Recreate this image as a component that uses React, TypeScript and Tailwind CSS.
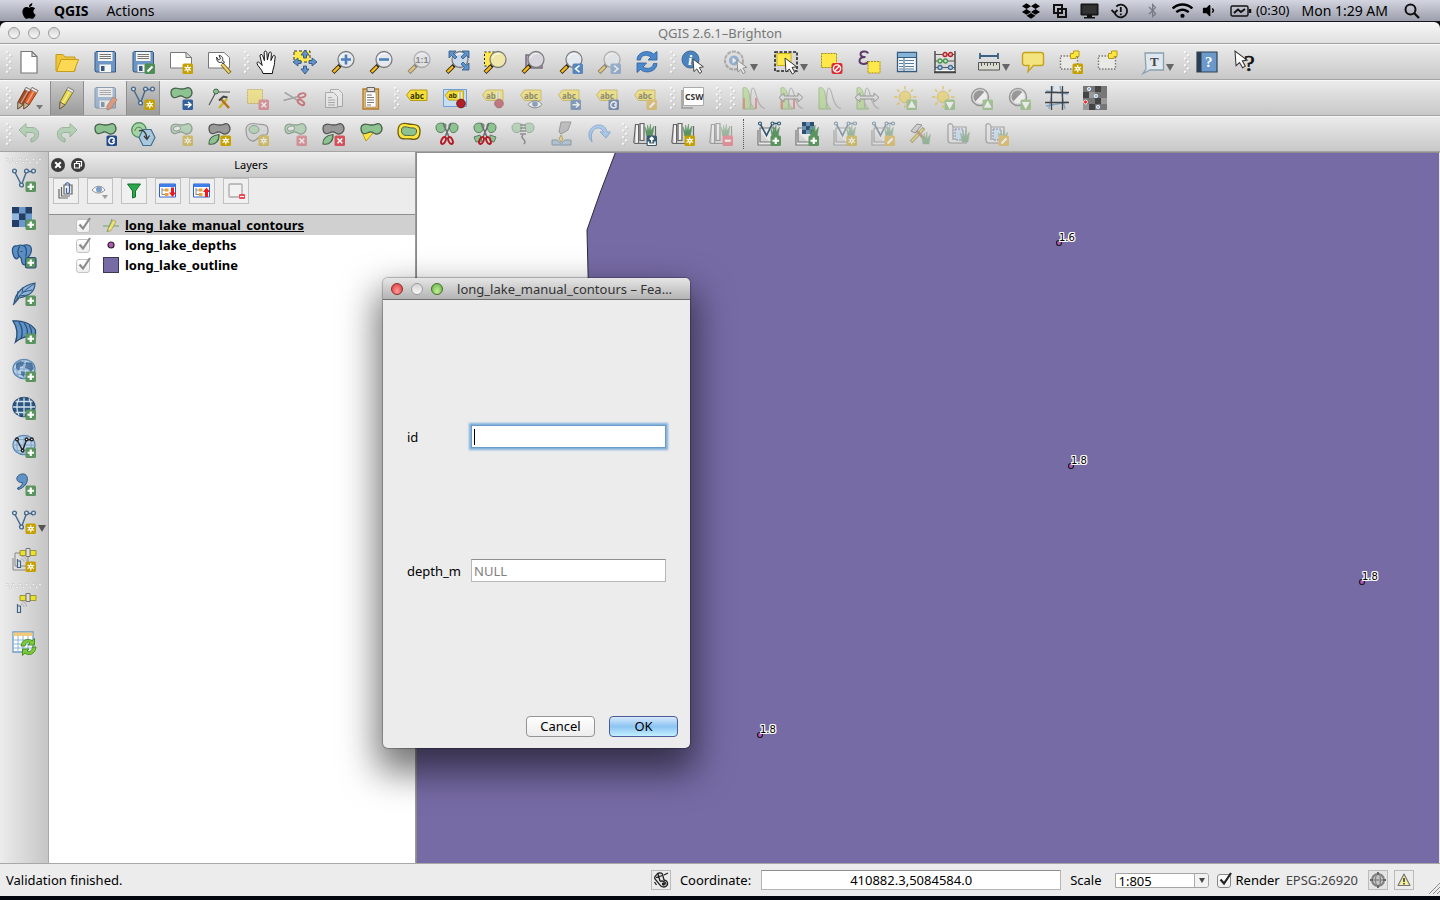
import React from "react";
import { FaApple, FaDropbox, FaWifi, FaVolumeDown, FaBluetoothB } from "react-icons/fa";

type Tool = { n: string; d?: React.ReactNode; off?: boolean; on?: boolean; menu?: boolean; grip?: "s" | "m" | "l" | "dots" };

const GLYPH: Record<string, string> = {
  star: "M18.750 15v7.500M15.500 17l6.500 3.600M22 17l-6.500 3.600",
  plus: "M18.750 15.500v6.500M15.500 18.750h6.500",
  pen: "M16.500 21.500l5-5",
  x: "M16.500 16.500l4.800 4.800M21.300 16.500l-4.800 4.800",
  right: "M15.500 18.750h6M19 16l3 2.750-3 2.750",
  rot: "M21 16.800a3 3 0 1 0 .5 3.400M19 19h2v-3",
  minus: "M15.800 18.750h6",
  left: "M20.500 15.500l-4 3.300 4 3.300",
  next: "M17 15.500l4 3.300-4 3.300",
  up: "M18.750 16l2.700 5h-5.400z",
  down: "M18.750 21.800l2.700-5h-5.400z",
  load: "M18.750 20.500v-5M16.700 17.400l2-2 2 2M15.500 19.500v2.700h6.500v-2.700",
};
const COLOR: Record<string, string> = {
  star: "#c4a000", plus: "#5b945f", pen: "#4e8d57", x: "#d2525c", right: "#34609b", rot: "#22498a",
  minus: "#e8505a", left: "#5786bd", next: "#5786bd", up: "#6dab52", down: "#6dab52", load: "#37596f",
};
function Badge({ k, c }: { k: string; c?: string }) {
  const solid = k === "up" || k === "down";
  return (
    <g>
      <rect x="13.500" y="13.500" width="10.500" height="10.500" rx="1.500" fill={c ?? COLOR[k]} />
      <path d={GLYPH[k]} stroke="#fff" strokeWidth={k === "plus" || k === "minus" || k === "pen" ? 2.200 : k === "star" ? 1.100 : 1.500} fill={solid ? "#fff" : "none"} />
      {k === "star" && <circle cx="18.750" cy="18.800" r="2" fill="#fff" />}
      {k === "star" && <circle cx="18.750" cy="18.800" r=".8" fill={COLOR.star} />}
    </g>
  );
}

const BLOB = "M2 6C2 2.500 6 1.500 9 2.500S15 3 18 1.800S23 4 23 7S20 12.500 17 12S14 9.500 11 10S7 12.500 4.500 11.500S2 8.500 2 6Z";
const Blob = ({ c = "#8cc391", s = "#47604a" }: { c?: string; s?: string }) => <path d={BLOB} fill={c} stroke={s} strokeWidth="1.300" />;
const Leaf = () => <path d="M2 22C1.500 17 5 13.500 12 12.500C12.500 18 9 23.500 2 22Z" fill="#8cc391" stroke="#47604a" strokeWidth="1.200" />;
const Ring = () => (
  <g>
    <Blob />
    <ellipse cx="8" cy="6.500" rx="3.600" ry="2.400" fill="#e8e8e8" stroke="#47604a" transform="rotate(-15 8 6.500)" />
  </g>
);
const Floppy = ({ c = "#6b96c6" }: { c?: string }) => (
  <g>
    <path d="M3 1.500h18.500l1 1v19.500h-19.500l-1-1v-18.500z" fill={c} stroke="#36587e" />
    <rect x="5" y="2" width="14.500" height="9" fill="#f4f4f2" />
    <path d="M6.500 4.500h11.500M6.500 6.500h11.500M6.500 8.500h11.500" stroke="#777" />
    <rect x="6.500" y="14.500" width="11.500" height="7.500" fill="#f4f4f2" />
    <rect x="8" y="16" width="3.500" height="5" fill="#36587e" />
  </g>
);
const Lens = ({ fill = "#e4e9ef" }: { fill?: string }) => (
  <g>
    <path d="M9.500 15l-7.500 7.500" stroke="#3a2e10" strokeWidth="4" />
    <path d="M8.500 16l-6 6" stroke="#f8bd1c" strokeWidth="2.400" />
    <path d="M10.500 14l-2.500 2.500" stroke="#222" strokeWidth="2.500" />
    <circle cx="15" cy="9.500" r="8" fill={fill} stroke="#7d7d7d" strokeWidth="1.300" />
    <path d="M9.500 8a6 6 0 0 1 8-4" stroke="#fff" fill="none" />
  </g>
);
const Cursor = ({ x, y, k = 1 }: { x: number; y: number; k?: number }) => (
  <path transform={`translate(${x} ${y}) scale(${k})`} d="M0 0l1 14 3.300-3 3 5 2.500-1.600-2.800-4.900 4.500-.8z" fill="#fff" stroke="#333" strokeWidth="1" />
);
const Pencil = ({ c = "#e8d94c", s = "#7d722b" }: { c?: string; s?: string }) => (
  <g>
    <path d="M4 16L12 1.500l6 3.200L9 19l-5 4z" fill={c} stroke={s} />
    <path d="M7 17l8-14" stroke="#fff" strokeOpacity=".45" strokeWidth="1.500" />
    <path d="M4 16l5 3-5.500 4z" fill="#cbb58e" stroke="#5b5141" strokeWidth=".8" />
    <path d="M12 1.500l6 3.200-1.300 2-6-3.200z" fill="#eee" stroke="#777" strokeWidth=".7" />
  </g>
);
const Tag = ({ t = "abc" }: { t?: string }) => (
  <g>
    <path d="M1.500 6l4-5h16.500v10.500H5.500z" fill="#f6df34" stroke="#b59a12" />
    <text x="5" y="9.500" fontSize="8" fontWeight="bold" fill="#3c3710" fontFamily="Noto Sans">{t}</text>
  </g>
);
const Pin = () => (
  <g>
    <path d="M17 6v8" stroke="#fff" strokeWidth="3" />
    <path d="M17 6v8" stroke="#888" />
    <circle cx="18" cy="17.500" r="4.300" fill="#b01f27" stroke="#7c1016" />
  </g>
);
const VEE = "M2.500 3.500L9.500 17 14.500 3.500M15 3.500h6";
const Vee = () => (
  <g fill="#dfe8f0" stroke="#44678b" strokeWidth="1.400">
    <path d={VEE} fill="none" />
    <circle cx="2.500" cy="3" r="1.900" /><circle cx="14.500" cy="3" r="1.900" /><circle cx="21.500" cy="3" r="1.900" /><circle cx="9.500" cy="17" r="1.900" />
  </g>
);
const Grass = ({ x = 0 }: { x?: number }) => (
  <path transform={`translate(${x} 0)`} d="M15 15L13.500 6l2.500 5 0-7 1.500 6 1.500-7 .2 7L22.500 5 21 15z" fill="#5b9363" stroke="#5b9363" strokeWidth=".5" />
);
const Books = () => (
  <g>
    <path d="M2.500 2.500h3v19h-3C1 21.500.5 20 1 18.500zM7 1.500h4v17H7zM5.500 21.500H22.500V4" fill="none" stroke="#666" strokeWidth="1.200" />
    <path d="M3 3.500h2v17H3zM8 2.500h2v15H8z" fill="#f3f3f3" />
    <g transform="translate(-1.500 -1)"><Grass /></g>
  </g>
);
const Plate = () => <path d="M1 8v15h15M3 6h15v14H3z" fill="#e9e9e9" stroke="#777" strokeWidth="1.200" />;
const MiniVee = () => (
  <g fill="#e8eef4" stroke="#32556f" strokeWidth="1.200">
    <path d="M3 1.500l6.500 12 6-12h6" fill="none" strokeWidth="1.600" />
    <circle cx="3" cy="1.500" r="1.500" /><circle cx="15.500" cy="1.500" r="1.500" /><circle cx="22" cy="1.500" r="1.500" />
  </g>
);
const Scissors = () => (
  <g fill="none">
    <path d="M8 1l6 14M16 1l-6 14" stroke="#6b7070" strokeWidth="1.600" />
    <ellipse cx="8.500" cy="18.500" rx="2" ry="3.700" transform="rotate(25 8.500 18.500)" stroke="#b31b24" strokeWidth="1.900" />
    <ellipse cx="15.500" cy="18.500" rx="2" ry="3.700" transform="rotate(-25 15.500 18.500)" stroke="#b31b24" strokeWidth="1.900" />
  </g>
);
const Leaves = () => (
  <path d="M1 5c0-4 6-5 10-2.500C11 7 9 11.500 5 10.500 2 10 1 8 1 5zM23 5c0-4-6-5-9-2.500 0 4.500 1.500 9 5 8 3-.5 4-3 4-5.500z" fill="#8cc391" stroke="#5a7d5e" />
);
const Hist = ({ red, arr }: { red?: boolean; arr?: boolean }) => (
  <g>
    <path d="M2 23V2c4-2 6 3 6.500 8S10 20 14 23z" fill="#a8d478" stroke="#6aa248" />
    <path d="M9.500 22C9.500 10 10 2 12 2s3 8 5 13 4 7 7 7.500" fill="none" stroke="#8b8b8b" strokeWidth="1.200" />
    {red && <path d="M3 12v11M15 12v11" stroke="#e33b3b" strokeWidth="1.600" />}
    {arr && <path d="M0 11.500L5 7v3h14V7l5 4.500L19 16v-3H5v3z" fill="#d8d8d8" stroke="#555" />}
  </g>
);
const Sun = () => (
  <g>
    <circle cx="12" cy="11" r="5.800" fill="#eccb3c" stroke="#c9a820" />
    <path d="M12 0v3.500M1 11h3.500M20 11h3.500M4 3.500l2.500 2.300M20 3.500l-2.500 2.300M4 19l2.500-2.500M12 19v3" stroke="#dcb92b" strokeWidth="1.800" />
  </g>
);
const Contrast = () => (
  <g>
    <circle cx="11" cy="11" r="8.500" fill="#ddd" stroke="#555" strokeWidth="1.500" />
    <path d="M15.500 6A6.500 6.500 0 1 0 6.500 15.500z" fill="#555" /><path d="M15.500 6A6.500 6.500 0 0 1 6.500 15.500z" fill="#fff" />
  </g>
);
const Undo = () => <path d="M2 8L9 1.500v4h6c9 0 9 13-1 14.500v-3.500c5-1 5-6 0-6H9v4.500z" fill="#8cc391" stroke="#5a8d62" />;
const Poly = () => <path d="M3.500 8h17v13h-17z" fill="#e9e9e6" stroke="#777" strokeDasharray="1.500 1.500" strokeWidth="1.400" />;
const YEL = "M13.500 8.500v-5h3V1h5.500v5.500h-3v2z";
const Globe = ({ dark }: { dark?: boolean }) => (
  <g>
    <ellipse cx="12" cy="11" rx="11" ry="9.700" fill={dark ? "#2c567f" : "#b9d0e6"} stroke={dark ? "#24486b" : "#5985b0"} strokeWidth="1.300" />
    <path d="M1 11h22M3.500 5.500h17M3.500 16.500h17M12 1.500v19M7 2.500c-3 6-3 11 0 17M17 2.500c3 6 3 11 0 17" fill="none" stroke={dark ? "#cfdeeb" : "#7fa6cc"} strokeWidth={dark ? 1.300 : 1} />
  </g>
);
const Sat = () => (
  <g>
    <path d="M8 2.500h6v5H8zM18 2.500h6v5h-6z" fill="#ece22b" stroke="#8b852a" strokeWidth=".8" />
    <path d="M14 0.500h4v8h-4z" fill="#ddd" stroke="#777" />
    <path d="M9 11c2 0 3 1 3 3M9.500 8.500c3 0 5 2 5 5" fill="none" stroke="#aaa" />
    <path d="M5.500 13h3v6.500h-3zM5.500 13v-2" fill="#dfe9f2" stroke="#44637f" strokeWidth="1.200" />
  </g>
);
const Region = () => (
  <g>
    <path d="M1 3c3-3 5 0 5 2h13v16H4c-3 0-3-2-3-4zM6 5v13" fill="#e5e5e5" stroke="#666" strokeWidth="1.200" />
    <path d="M8 7h8v11H8z" fill="#b8d8f2" stroke="#446" strokeDasharray="2 1" />
    <g transform="translate(0 5)"><Grass /></g>
  </g>
);

const g = (grip: Tool["grip"]): Tool => ({ n: "", grip });

const ROW1: Tool[] = [
  g("m"),
  { n: "New project", d: <path d="M4 1.500h11l5 5V23H4zM15 1.500v5h5" fill="#fff" stroke="#777" strokeWidth="1.200" /> },
  { n: "Open project", d: <g stroke="#c69a1c"><path d="M1 21V4.500h7l2 2.500h10v14z" fill="#efc63a" /><path d="M1.500 21.500L6 9.500h17.500l-4.500 12z" fill="#fbd952" /></g> },
  { n: "Save", d: <Floppy /> },
  { n: "Save as", d: <g><Floppy /><Badge k="pen" /></g> },
  { n: "New composer", d: <g><path d="M1.500 2.500H17l5.500 5V18h-21zM17 2.500v5h5.500" fill="#fff" stroke="#777" /><Badge k="star" /></g> },
  { n: "Composer manager", d: <g><path d="M1.500 2.500H17l5.500 5V18h-21z" fill="#fff" stroke="#777" /><path d="M15 14l8 9" stroke="#7a6420" strokeWidth="4" /><path d="M15 14l7.500 8.500" stroke="#ecd46a" strokeWidth="2" /><path d="M9.500 7c0 5 3 6.500 5 5l1.500 2 1.500-2-2-1.500c1-3-1-5-3.500-5l1.500 3-2 1.500z" fill="#eee" stroke="#333" /></g> },
  g("m"),
  { n: "Pan", d: <path d="M8 23.500C7.500 20 2.500 16 2 13.500 1.700 12 3.500 11.500 4.800 13L7.200 15.500 5 6C4.700 4.300 7 3.800 7.600 5.500L9.400 10.500 9.200 2.500C9.200.6 11.600.6 11.800 2.500L12.400 10 14 3C14.400 1.500 16.500 1.800 16.400 3.500L15.900 10.500 18 6C18.700 4.700 20.600 5.500 20.200 7.100 19.400 11 19.800 14 18.800 17 18 19.500 17.500 21 17.400 23.500Z" fill="#fff" stroke="#111" /> },
  { n: "Pan to selection", d: <g><path d="M1 1h16v11H1z" fill="#ffe84a" stroke="#333" strokeDasharray="3 2" /><path d="M12 0l4 5h-2.500v3h-3V5H8zM12 24l4-5h-2.500v-3h-3v3H8zM0 12l5-4v2.500h3v3H5V16zM24 12l-5-4v2.500h-3v3h3V16z" fill="#6392c8" stroke="#2f5886" strokeWidth=".9" /></g> },
  { n: "Zoom in", d: <g><Lens /><path d="M15 4.500v10M10 9.500h10" stroke="#4e7fb8" strokeWidth="2.600" /></g> },
  { n: "Zoom out", d: <g><Lens /><path d="M10 9.500h10" stroke="#4e7fb8" strokeWidth="2.600" /></g> },
  { n: "Zoom to native resolution", off: true, d: <g><Lens /><text x="8.500" y="13" fontSize="9" fontWeight="bold" fill="#333" fontFamily="Liberation Sans">1:1</text></g> },
  { n: "Zoom full", d: <g><Lens fill="#c9d8e8" /><path d="M4 1h7L8.500 3.500l3.500 3.500-2 2L6.500 5.500 4 8zM24 1h-7l2.500 2.500-3.500 3.500 2 2 3.500-3.500L24 8zM24 20h-7l2.500-2.500L16 14l2-2 3.500 3.500L24 13z" fill="#5f92c8" stroke="#2f5886" strokeWidth=".8" /></g> },
  { n: "Zoom to selection", d: <g><path d="M1.500 2h14v14h-14z" fill="#ffe84a" stroke="#222" strokeDasharray="2 2" /><Lens fill="#efe7a8" /></g> },
  { n: "Zoom to layer", d: <g><path d="M5 5h16v13H5z" fill="#b6aebc" stroke="#786d80" strokeWidth="1.500" /><Lens fill="#d9d5de" /></g> },
  { n: "Zoom last", d: <g><Lens /><Badge k="left" /></g> },
  { n: "Zoom next", off: true, d: <g><Lens /><Badge k="next" /></g> },
  { n: "Refresh", d: <g fill="#4b89ce" stroke="#2c619c" strokeWidth=".8"><path d="M2 10C2 2 13-1 18.500 4L22 1.500V10h-9l3-3C11 4 6 5 5.500 10z" /><path d="M22 13.500c0 8-11 11-16.500 6L2 22.500V13h9.500l-3.500 4c5 3 10 1 10.500-3.500z" /></g> },
  g("s"),
  { n: "Identify features", d: <g><circle cx="9.500" cy="9.500" r="8.500" fill="#4d83bd" stroke="#386896" /><text x="7" y="15" fontSize="15" fontStyle="italic" fontWeight="bold" fill="#fff" fontFamily="Liberation Serif">i</text><Cursor x={12} y={9} k={0.9} /></g> },
  { n: "Run feature action", off: true, menu: true, d: <g><circle cx="10" cy="10.500" r="9" fill="#ddd" stroke="#777" strokeWidth="2" strokeDasharray="4 1" /><circle cx="10" cy="10.500" r="5" fill="#4d83bd" /><path d="M8.500 7.500l4 3-4 3z" fill="#fff" /><Cursor x={13} y={10} k={0.85} /></g> },
  { n: "Select features", menu: true, d: <g><path d="M1 2h22v19H1z" fill="#d9d9d9" stroke="#222" strokeWidth="1.600" strokeDasharray="3 1.500" /><path d="M3 3.500h14v12H3z" fill="#ffe84a" stroke="#cfae1c" /><Cursor x={11} y={8} /></g> },
  { n: "Deselect features", d: <g><path d="M2.500 3.500h15v14h-15z" fill="#ffe84a" stroke="#a58a16" strokeDasharray="2 1" /><rect x="12.500" y="13" width="11" height="11" rx="2" fill="#dc2c32" /><circle cx="18" cy="18.500" r="3.600" fill="none" stroke="#fff" strokeWidth="1.400" /><path d="M15.500 21l5-5" stroke="#fff" strokeWidth="1.400" /></g> },
  { n: "Select by expression", d: <g><path d="M11 3.500C10 .5 3.500 1 3.500 4.200c0 2 2 2.800 5 2.800-4 0-6 1.500-6 3.800 0 4 7.500 4 9 .7" fill="none" stroke="#5e3a6b" strokeWidth="2" /><path d="M11 11.500h12V23H11z" fill="#ffe84a" stroke="#a58a16" strokeDasharray="2 1" /></g> },
  { n: "Open attribute table", d: <g><path d="M2.500 2.500h19v19h-19z" fill="#f6fafd" stroke="#355c80" strokeWidth="1.300" /><path d="M3 3h18v4H3z" fill="#86b4d6" /><path d="M3 7.500h18M9 7v14" stroke="#355c80" /><path d="M4 10.500h4M10 10.500h9M4 13.500h4M10 13.500h9M4 16.500h4M10 16.500h9M4 19h4M10 19h9" stroke="#597d9b" /></g> },
  { n: "Field calculator", d: <g fill="none"><path d="M2 1v21h20V1M1 22.500h22" stroke="#444" strokeWidth="1.400" /><path d="M2 4.500h20M2 11h20M2 17.500h20" stroke="#555" /><path d="M2.500 20.500h19" stroke="#fff" /><g fill="#f3b4b4" stroke="#b3232b" strokeWidth="1.300"><circle cx="12" cy="4.500" r="2" /><circle cx="17.500" cy="4.500" r="2" /></g><g fill="#c7e5c3" stroke="#4b9550" strokeWidth="1.300"><circle cx="7" cy="11" r="2" /><circle cx="12.500" cy="11" r="2" /></g><g fill="#bdd4ea" stroke="#3f6d9b" strokeWidth="1.300"><circle cx="7" cy="17.500" r="2" /><circle cx="17.500" cy="17.500" r="2" /></g></g> },
  { n: "Measure line", menu: true, d: <g><path d="M4 6h18M4 3v6M22 3v6" stroke="#3b6284" strokeWidth="1.800" /><path d="M2.500 12.500h21v7.500h-21z" fill="#d9dbd0" stroke="#555" /><path d="M5.500 13v3M8.500 13v2M11.500 13v3M14.500 13v2M17.500 13v3M20.500 13v2" stroke="#555" /></g> },
  { n: "Map tips", d: <path d="M4 2.500h16a2.500 2.500 0 0 1 2.500 2.500v8a2.500 2.500 0 0 1-2.500 2.500h-7.500L7 21.500l1-6H4A2.500 2.500 0 0 1 1.500 13V5A2.500 2.500 0 0 1 4 2.500z" fill="#f4e480" stroke="#c4a21c" strokeWidth="1.400" /> },
  { n: "New bookmark", d: <g><g transform="translate(-2 -2)"><Poly /><path d={YEL} transform="translate(0 2)" fill="#ffe63c" stroke="#b89a14" /></g><Badge k="star" /></g> },
  { n: "Show bookmarks", d: <g transform="translate(-2 -2)"><Poly /><path d={YEL} transform="translate(0 2)" fill="#ffe63c" stroke="#b89a14" /></g> },
  { n: "Text annotation", menu: true, d: <g><path d="M5 3h18.500v17H10l-7 3.500 3-4.500z" fill="#dfe8ee" stroke="#8ba0ae" strokeWidth="1.300" /><text x="10" y="16" fontSize="13" fontWeight="bold" fill="#444" fontFamily="Liberation Serif">T</text></g> },
  g("m"),
  { n: "Help", d: <g><path d="M2 2h20v20H2z" fill="#6b99cb" stroke="#2f4356" strokeWidth="1.200" /><path d="M2 2h4.500v20H2z" fill="#2c3f52" /><text x="10" y="17" fontSize="15" fontWeight="bold" fill="#fff" fontFamily="Liberation Serif">?</text></g> },
  { n: "What's this", d: <g><Cursor x={2} y={1} k={1.050} /><text x="11" y="21" fontSize="24" fill="#111" fontFamily="Liberation Serif" stroke="#111" strokeWidth=".6">?</text></g> },
];

const ROW2: Tool[] = [
  g("m"),
  { n: "Current edits", d: <g><g transform="translate(-3 0)"><Pencil c="#a34a26" s="#6b3a22" /></g><g transform="translate(3 0)"><Pencil c="#e2622b" s="#8a3f20" /></g><path d="M19 19h7l-3.500 4.500z" fill="#777" /></g> },
  { n: "Toggle editing", on: true, d: <g transform="translate(1 0)"><Pencil /></g> },
  { n: "Save layer edits", off: true, d: <g><Floppy /><path d="M14 20l6-9 4 2.500-6 9-4 1.500z" fill="#e2622b" stroke="#8a3f20" /></g> },
  { n: "Add feature", on: true, d: <g><Vee /><Badge k="star" /></g> },
  { n: "Move feature", d: <g><Blob /><Badge k="right" /></g> },
  { n: "Node tool", d: <g><path d="M2 19L9 6h14" fill="none" stroke="#555" strokeWidth="1.200" /><circle cx="9" cy="5.500" r="2.500" fill="#8cc391" stroke="#47604a" /><path d="M12 22l8-9" stroke="#cdb52e" strokeWidth="2.500" /><path d="M14 13l8 9" stroke="#b5711e" strokeWidth="2.500" /><path d="M12 14.500l4.500-4 4 1" fill="none" stroke="#444" strokeWidth="2" /></g> },
  { n: "Delete selected", off: true, d: <g><path d="M2.500 3.500h15v14h-15z" fill="#f4e040" stroke="#a58a16" strokeDasharray="2 1" /><Badge k="x" /></g> },
  { n: "Cut features", off: true, d: <g transform="rotate(-82 12 12)"><Scissors /></g> },
  { n: "Copy features", off: true, d: <g fill="#f3f3f3" stroke="#777"><path d="M9.500 3.500h8l4 4v13h-12z" /><path d="M4.500 6.500h8l4 4v11h-12z" /><path d="M7 11.500h4M7 14h7M7 16.500h7M7 19h7" /></g> },
  { n: "Paste features", d: <g><path d="M4 3h15.500v20H4z" fill="#e8b565" stroke="#b17c2c" strokeWidth="1.300" /><path d="M6.500 6H17v15H6.500z" fill="#fff" stroke="#888" strokeWidth=".6" /><path d="M8 1.500h7.500v4H8z" fill="#ddd" stroke="#666" /><path d="M8 9h5M8 11.500h7M8 14h7M8 16.500h7M8 19h4" stroke="#777" /></g> },
  g("s"),
  { n: "Label options", d: <g transform="translate(0 3)"><Tag /></g> },
  { n: "Highlight pinned labels", d: <g><path d="M.5 3.500h23v17H.5z" fill="#c8dcf2" stroke="#6da0d8" /><g transform="translate(1 4) scale(.88)"><Tag t="ab" /></g><Pin /></g> },
  { n: "Pin labels", off: true, d: <g><g transform="translate(0 3)"><Tag t="ab" /></g><Pin /></g> },
  { n: "Show hide labels", off: true, d: <g><g transform="translate(0 3)"><Tag /></g><path d="M9 18.500c4-5 11-5 14 0-4 4.500-10 4.500-14 0z" fill="#fff" stroke="#444" /><circle cx="16" cy="18" r="2.800" fill="#3f6ea6" /></g> },
  { n: "Move label", off: true, d: <g><g transform="translate(0 3)"><Tag /></g><Badge k="right" /></g> },
  { n: "Rotate label", off: true, d: <g><g transform="translate(0 3)"><Tag /></g><Badge k="rot" /></g> },
  { n: "Change label", off: true, d: <g><g transform="translate(0 3)"><Tag /></g><Badge k="pen" c="#d9a520" /></g> },
  g("m"),
  { n: "Metadata search", d: <g><path d="M1 4v18h11" fill="none" stroke="#999" strokeWidth="1.400" /><path d="M2.500 1.500h20v18h-20z" fill="#fff" stroke="#aaa" /><text x="4" y="13.500" fontSize="8.500" fontWeight="bold" fill="#333" fontFamily="Noto Sans">CSW</text></g> },
  g("s"),
  g("l"),
  { n: "Local histogram stretch", off: true, d: <Hist red /> },
  { n: "Full histogram stretch", off: true, d: <Hist red arr /> },
  { n: "Local cumulative cut", off: true, d: <Hist /> },
  { n: "Full cumulative cut", off: true, d: <Hist arr /> },
  { n: "Increase brightness", off: true, d: <g><Sun /><Badge k="up" /></g> },
  { n: "Decrease brightness", off: true, d: <g><Sun /><Badge k="down" /></g> },
  { n: "Increase contrast", off: true, d: <g><Contrast /><Badge k="up" /></g> },
  { n: "Decrease contrast", off: true, d: <g><Contrast /><Badge k="down" /></g> },
  { n: "Georeferencer", d: <g fill="none"><path d="M1 5l22 3M1 20l22-4M8 0L4 23M15 0l5 23" stroke="#7da5c8" strokeWidth="1.300" /><path d="M0 6.500h24M0 16.500h24M6.500 0v24M17.500 0v24" stroke="#444" strokeWidth="1.300" /></g> },
  { n: "Interpolation", d: <g><path d="M0 0h24v24H0z" fill="#777" /><path d="M0 6h6v6H0zM12 0h6v6h-6zM12 12h6v6h-6zM6 18h6v6H6z" fill="#444" /><path d="M6 6h6v6H6zM18 12h6v6h-6zM0 18h6v6H0z" fill="#999" /><g fill="#8fb5e0" stroke="#fff" strokeWidth=".8"><circle cx="6" cy="3" r="1.700" /><circle cx="13" cy="10" r="1.700" /><circle cx="15" cy="21" r="1.700" /></g><circle cx="2.500" cy="16" r="2" fill="#e22" stroke="#fff" strokeWidth=".8" /></g> },
];

const ROW3: Tool[] = [
  g("m"),
  { n: "Undo", off: true, d: <Undo /> },
  { n: "Redo", off: true, d: <g transform="translate(24 0) scale(-1 1)"><Undo /></g> },
  { n: "Rotate feature", d: <g><Blob /><Badge k="rot" /></g> },
  { n: "Simplify feature", d: <g><circle cx="8" cy="8" r="7.300" fill="#a6d3a4" stroke="#4c8a55" strokeWidth="1.200" /><path d="M4 9c0-5 7-5 8 0" fill="none" stroke="#4c8a55" /><path d="M12 7.500h8l4 8-4 8h-8l-4-8z" fill="#a9c8de" stroke="#416d8e" strokeWidth="1.200" /><path d="M8 9c4-2 7 1 8 7M13 14l3 3.500 2.500-4" fill="none" stroke="#333" strokeWidth="1.200" /></g> },
  { n: "Add ring", off: true, d: <g><Ring /><Badge k="star" /></g> },
  { n: "Add part", d: <g><Blob c="#9a9a9a" s="#555" /><Leaf /><Badge k="star" /></g> },
  { n: "Fill ring", off: true, d: <g><path d="M1 8C1 1 8 1 12 2s11-1 11 6-4 5-6 5-6 7-10 6S1 13 1 8z" fill="#ccc" stroke="#555" strokeWidth="1.200" /><ellipse cx="9" cy="7.500" rx="5" ry="4" fill="#8cc391" stroke="#47604a" /><Badge k="star" /></g> },
  { n: "Delete ring", off: true, d: <g><Ring /><Badge k="x" /></g> },
  { n: "Delete part", d: <g><Blob c="#9a9a9a" s="#555" /><Leaf /><Badge k="x" /></g> },
  { n: "Reshape features", d: <g><path d="M2 8l5 11 8-9z" fill="#ffe63c" stroke="#b89a14" /><Blob /></g> },
  { n: "Offset curve", d: <g><path d="M1 9C1 0 8 1 12 2s11-1 11 7-4 9-9 8-13 3-13-8z" fill="#ffe63c" stroke="#6d5c10" strokeWidth="1.300" /><path d="M4.500 8.500C4.500 4 8 4.500 12 5.500s7.500-.5 7.500 3.500-3 5-6 4.500-9 1.500-9-5z" fill="#8cc391" stroke="#47604a" /></g> },
  { n: "Split features", d: <g><Leaves /><Scissors /></g> },
  { n: "Split parts", d: <g><Leaves /><path d="M1 15l6-2 2 6-6 1zM17 13l6 2-2 5-4-1z" fill="#8cc391" stroke="#5a7d5e" /><Scissors /></g> },
  { n: "Merge features", off: true, d: <g><Leaves /><path d="M9 3h6M9 6h6M9 9h6M9 12h6M12 13c-4 4 5 4 1 9" fill="none" stroke="#444" strokeWidth="1.500" /></g> },
  { n: "Merge attributes", off: true, d: <g><path d="M12 0h10l-3 8-7 4-2-2z" fill="#999" stroke="#555" /><path d="M3 18h5l4 3.500 4-3.500h6v5H3z" fill="#8fb1cf" stroke="#47677f" /><path d="M12 13l2 4-2 3-2-3z" fill="#f0c93c" stroke="#8a7220" /></g> },
  { n: "Rotate symbols", off: true, d: <path d="M5 20C-2 12 4 3 12 3c5 0 7 3 8 7h3.500L19 16l-6-6h3.500C15 7 13 6 11 6c-5 0-8 6-6 14z" fill="#7db4ee" stroke="#3d7cc9" /> },
  g("s"),
  { n: "Open mapset", d: <g><Books /><Badge k="load" /></g> },
  { n: "New mapset", d: <g><Books /><Badge k="star" /></g> },
  { n: "Close mapset", off: true, d: <g><Books /><Badge k="minus" /></g> },
  g("dots"),
  { n: "Add GRASS vector layer", d: <g><Plate /><MiniVee /><Grass x={0} /><Badge k="plus" /></g> },
  { n: "Add GRASS raster layer", d: <g><Plate /><path d="M7 0h12v12H7z" fill="#6c93b5" /><path d="M7 0h4v4H7zM15 0h4v4h-4zM11 4h4v4h-4zM7 8h4v4H7zM15 8h4v4h-4z" fill="#2f4f6e" /><Grass x={1} /><Badge k="plus" /></g> },
  { n: "Create GRASS vector", off: true, d: <g><Plate /><MiniVee /><Grass x={0} /><Badge k="star" /></g> },
  { n: "Edit GRASS vector", off: true, d: <g><Plate /><MiniVee /><Grass x={0} /><Badge k="pen" c="#d9a520" /></g> },
  { n: "GRASS tools", off: true, d: <g><path d="M2 20L15 6" stroke="#7c6a20" strokeWidth="3.500" /><path d="M2.500 19.500L14 7" stroke="#e6cf3a" strokeWidth="1.800" /><path d="M6 7l13 14" stroke="#a3602a" strokeWidth="3" /><path d="M2 9l6-7 5 1-7 8z" fill="#bbb" stroke="#444" /><g transform="translate(-1 7)"><Grass /></g></g> },
  { n: "Display GRASS region", off: true, d: <Region /> },
  { n: "Edit GRASS region", off: true, d: <g><Region /><Badge k="pen" c="#d9a520" /></g> },
];

const SIDE: Tool[] = [
  { n: "Add vector layer", d: <g><Vee /><Badge k="plus" /></g> },
  { n: "Add raster layer", d: <g><path d="M0 1h20v20H0z" fill="#6c99cb" /><path d="M0 1h7v6.500H0zM13.500 1H20v6.500h-6.500zM7 7.500h6.500V14H7zM0 14h7v7H0zM13.500 14H20v7h-6.500z" fill="#243f63" /><path d="M0 7.500h7V14H0z" fill="#93b8e0" /><Badge k="plus" /></g> },
  { n: "Add PostGIS layer", d: <g fill="#5b8fc4" stroke="#274f7c" strokeWidth="1.200"><path d="M5 2C1 1-.5 5 1 10c1 4 3 6 5 4l1-2 2 2c1 3 0 7 4 7 4 .5 3-4 3-8 4-3 5-11 0-12-2-.5-4 0-5 .5C9 .5 7 1 5 2z" /><path d="M7 12C5 8 6 4 8 2.500M11 1.500c4 1 4 7 2.500 11M8.500 7.500h2" fill="none" /><Badge k="plus" /></g> },
  { n: "Add SpatiaLite layer", d: <g><path d="M2 22C3 10 12 3 23 1c0 7-4 13-16 15z" fill="#8bb3dc" stroke="#33587d" strokeWidth="1.200" /><path d="M1 23C6 14 14 7 22 2M7 14l9-1M11 10l9-2M5 17l1-8M10 11l1-6" stroke="#33587d" fill="none" /><Badge k="plus" /></g> },
  { n: "Add MSSQL layer", d: <g><path d="M1 1c8-1 18 2 22.500 9v7c-8-2-14 0-20 5C6 15 5 7 1 1z" fill="#5f93c8" stroke="#274b70" strokeWidth="1.300" /><path d="M7 2c4 6 4 11 2 17M12 3c4 5 4 9 3 13M17 5.500c3 4 3 7 2.500 10.500" fill="none" stroke="#274b70" strokeWidth="1.200" /><Badge k="plus" /></g> },
  { n: "Add WMS layer", d: <g><Globe /><path d="M4 6l4-3 4 1-1 4-3 1-1 4-3-3zM14 4l6 1 2 5-3 4-3-3-3-1zM9 13l4 1-1 5-3-2z" fill="#355f8d" opacity=".75" /><Badge k="plus" /></g> },
  { n: "Add WCS layer", d: <g><Globe dark /><Badge k="plus" /></g> },
  { n: "Add WFS layer", d: <g><Globe /><g transform="translate(3 3) scale(.8)" stroke="#222" strokeWidth="1.700" fill="#fff"><path d={VEE} fill="none" /><circle cx="2.500" cy="3" r="1.700" /><circle cx="14.500" cy="3" r="1.700" /><circle cx="21" cy="3" r="1.700" /><circle cx="9.500" cy="17" r="1.700" /></g><Badge k="plus" /></g> },
  { n: "Add delimited text layer", d: <g><path d="M10 2c5-1 7 5 4 10-2 3-5 5-8 5.500l-.5-1.500c3-1 5-3 5-5.500C3 11 3 3 10 2z" fill="#5f93c8" stroke="#33587d" /><Badge k="plus" /></g> },
  { n: "New shapefile layer", d: <g><Vee /><Badge k="star" /><path d="M26 15h8l-4 7z" fill="#555" /></g> },
  { n: "Create GPX layer", d: <g><path d="M1 10v12h14M3 5h13v13H3z" fill="none" stroke="#888" /><Sat /><Badge k="star" /></g> },
];

function Art({ t }: { t: Tool }) {
  return (
    <svg width="24" height="24" viewBox="0 0 24 24" fill="none" overflow="visible" className={t.off ? "shrink-0 opacity-50" : "shrink-0"}>
      {t.d}
    </svg>
  );
}

const Arrow = () => <svg width="8" height="7" viewBox="0 0 8 7" className="mt-2.5 shrink-0"><path d="M0 0h8L4 7z" fill="#666" /></svg>;

function Grip({ kind }: { kind: Tool["grip"] }) {
  if (kind === "dots") return <div className="flex w-2.5 shrink-0 justify-start pl-px"><div className="my-0.5 w-0 self-stretch border-l border-dotted border-[#555]" /></div>;
  const w = kind === "s" ? "w-2" : kind === "l" ? "w-3.5" : "w-2.5";
  return (
    <div className={`flex shrink-0 items-center justify-end ${w}`}>
      <svg width="6" height="24" viewBox="0 0 6 24">
        {[0, 1, 2, 3, 4, 5, 6].map((i) => (
          <g key={i}>
            <rect x={i % 2 ? 3 : 0} y={1 + i * 3.300} width="2" height="2" fill="#fafafa" />
            <rect x={i % 2 ? 4.500 : 1.500} y={2.500 + i * 3.300} width="1" height="1" fill="#aaa" />
          </g>
        ))}
      </svg>
    </div>
  );
}

function Toolbar({ items, label }: { items: Tool[]; label: string }) {
  return (
    <div role="toolbar" aria-label={label} className="flex h-9 shrink-0 overflow-hidden border-t border-b border-t-[#f8f8f8] border-b-[#a4a4a4] bg-linear-to-b from-[#ebebeb] to-[#c8c8c8] pl-0.5">
      {items.map((t, i) =>
        t.grip ? (
          <Grip key={i} kind={t.grip} />
        ) : (
          <button
            key={i}
            type="button"
            aria-label={t.n}
            className={`mr-1 flex shrink-0 items-center ${t.menu ? "w-[46px] justify-end gap-0.5 pr-0.5" : "w-[34px] justify-center"} ${t.on ? "border-x border-[#8e8e8e] bg-linear-to-b from-[#c9c9c9] to-[#9b9b9b]" : ""}`}
          >
            <Art t={t} />
            {t.menu && <Arrow />}
          </button>
        ),
      )}
    </div>
  );
}

const SideGrip = () => (
  <svg width="36" height="7" viewBox="0 0 36 7" className="shrink-0">
    {Array.from({ length: 11 }, (_, i) => (
      <rect key={i} x={i * 3.300} y={i % 2 ? 3.500 : 0.500} width="2" height="2" fill="#fafafa" stroke="#bbb" strokeWidth=".4" />
    ))}
  </svg>
);

const SideButton = ({ t }: { t: Tool }) => (
  <button type="button" aria-label={t.n} className="flex h-[38px] w-full shrink-0 items-center justify-center">
    <Art t={t} />
  </button>
);

const tree = (down: boolean) => (
  <g>
    <path d="M1.500 3h16v13h-16z" fill="#fff" stroke="#2f62c8" /><path d="M1.500 3h16v3h-16z" fill="#3f7de8" />
    <path d="M4 7v7M4 9h3M4 13.500h3" stroke="#888" /><path d="M7 7.500h3.500v3H7zM7 12h3.500v3H7z" fill="#f0a030" />
    <path d={down ? "M13 6.500h3v5h2L14.500 16 11 11.500h2z" : "M13 16h3v-5h2l-3.500-4.500L11 11h2z"} fill="#f01818" />
  </g>
);
const LAYER_TOOLS: { n: string; d: React.ReactNode }[] = [
  { n: "Add group", d: <g fill="none" stroke="#666" strokeWidth="1.200"><path d="M3 8v9h9M5.500 6v9H14M8 4h8v9H8z" /><path d="M10.500 7v4c0 2 3 2 3 0V4c0-3-4-3-4 0" stroke="#3c62a0" /></g> },
  { n: "Manage layer visibility", d: <g opacity=".8"><path d="M2 9c4-5 10-5 13 0-4 4-9 4-13 0z" fill="#fff" stroke="#777" /><circle cx="9" cy="8.500" r="3" fill="#5f8cc0" /><path d="M12 14h6l-3 4z" fill="#888" /></g> },
  { n: "Filter legend", d: <path d="M3.500 3h13l-5 7v6l-3 1v-7z" fill="#2ba84a" stroke="#177030" /> },
  { n: "Expand all", d: tree(true) },
  { n: "Collapse all", d: tree(false) },
  { n: "Remove layer", d: <g><rect x="3" y="3" width="13" height="13" rx="1" fill="#f2f2f2" stroke="#aaa" strokeWidth="1.300" /><rect x="13" y="13" width="6" height="5" rx="1" fill="#ee4a50" /><path d="M14 15.500h4" stroke="#fff" /></g> },
];

const LAYERS = [
  { name: "long_lake_manual_contours", sel: true, sym: <g><path d="M0 9h16M4 15L9 2" stroke="#6fa463" /><path d="M5 12l5-9 3 1.500-5 9-3 1z" fill="#efe27e" stroke="#a0944a" strokeWidth=".7" /></g> },
  { name: "long_lake_depths", sel: false, sym: <circle cx="8" cy="8" r="3" fill="#b455b8" stroke="#222" strokeWidth="1.200" /> },
  { name: "long_lake_outline", sel: false, sym: <rect x=".5" y=".5" width="15" height="15" fill="#776ba6" stroke="#3c3659" /> },
];

function Tick({ id, dark, label }: { id: string; dark?: boolean; label?: string }) {
  return (
    <span className="relative inline-flex h-4 w-4 shrink-0">
      <input id={id} type="checkbox" defaultChecked aria-label={label} className={`h-3.5 w-3.5 appearance-none self-end rounded-[3px] border bg-linear-to-b from-white to-[#eee] ${dark ? "border-[#888]" : "border-[#c4c4c4]"}`} />
      <svg width="16" height="16" viewBox="0 0 16 16" className="pointer-events-none absolute inset-0"><path d="M3.500 7.500l3.500 4L14 1" fill="none" stroke={dark ? "#222" : "#8c8c8c"} strokeWidth="2.200" /></svg>
    </span>
  );
}

const POINTS = [
  { x: 642, y: 90, t: "1.6" },
  { x: 654, y: 313, t: "1.8" },
  { x: 945, y: 429, t: "1.8" },
  { x: 343, y: 582, t: "1.8" },
];

const Light = ({ c, label }: { c: string; label: string }) => <button type="button" aria-label={label} className={`h-3 w-3 rounded-full border ${c}`} />;
const CLEAR = "border-[#9c9c9c] bg-linear-to-b from-[#d4d4d4] to-[#f8f8f8]";

export default function App() {
  return (
    <div className="relative flex h-screen flex-col overflow-hidden bg-[#05070f] pb-1 font-['Noto_Sans','Open_Sans',sans-serif] text-[13px] leading-4 text-black">
      <header className="flex h-[22px] shrink-0 items-center border-b border-[#14161f] bg-linear-to-b from-[#d3d6e0] to-[#9c9fab] pr-5 pl-5 text-sm">
        <FaApple size={18} className="mr-4" aria-label="Apple" />
        <nav className="flex gap-[18px]">
          <button type="button" className="font-bold">QGIS</button>
          <button type="button">Actions</button>
        </nav>
        <div className="ml-auto flex items-center">
          <FaDropbox size={18} className="mr-3" />
          <svg width="16" height="16" viewBox="0 0 16 16" fill="none" stroke="#111" strokeWidth="2" className="mr-3"><path d="M6 10H2V2h8v3M6 6h8v8H6zM6 10h4V6" /></svg>
          <svg width="19" height="16" viewBox="0 0 19 16" className="mr-3"><path d="M1 1h17v11H1z" fill="#222" stroke="#111" /><path d="M2.500 2.500h14v8h-14z" fill="#333" /><path d="M7 12h5v2h3v1.500H4V14h3z" fill="#111" /></svg>
          <svg width="18" height="16" viewBox="0 0 18 16" fill="none" stroke="#111" strokeWidth="1.800" className="mr-4"><path d="M3.500 9a6.300 6.300 0 1 0 1.800-5.500M.5 7l3 3 3-3" /><path d="M9.800 4v5M9.800 10.500v1.800" /></svg>
          <FaBluetoothB size={15} className="mr-3 text-[#777a84]" />
          <FaWifi size={21} className="mr-2" />
          <FaVolumeDown size={15} className="mr-3.5" />
          <svg width="22" height="14" viewBox="0 0 22 14" fill="none" stroke="#111" strokeWidth="1.400" className="mr-1"><rect x="1" y="2" width="17" height="10" rx="1.500" /><path d="M20 5v4" strokeWidth="2.500" /><path d="M4 9l4-3.500 3 2.500 4-3" strokeWidth="2" /></svg>
          <span className="mr-3 text-[13px]">(0:30)</span>
          <span className="mr-4">Mon 1:29 AM</span>
          <svg width="16" height="16" viewBox="0 0 16 16" fill="none" stroke="#111" strokeWidth="2"><circle cx="6.500" cy="6.500" r="5" /><path d="M10 10l5 5" strokeWidth="2.400" /></svg>
        </div>
      </header>

      <div className="flex h-[22px] shrink-0 items-center rounded-t-md border-b border-[#a0a0a0] bg-linear-to-b from-[#f7f7f7] to-[#e0e0e0] px-2">
        <div className="flex w-20 gap-2">
          <Light c={CLEAR} label="Close window" />
          <Light c={CLEAR} label="Minimize window" />
          <Light c={CLEAR} label="Zoom window" />
        </div>
        <h1 className="flex-1 pr-20 text-center text-[#777]">QGIS 2.6.1–Brighton</h1>
      </div>

      <Toolbar items={ROW1} label="File and navigation" />
      <Toolbar items={ROW2} label="Digitizing and labels" />
      <Toolbar items={ROW3} label="Advanced digitizing and GRASS" />

      <div className="flex min-h-0 flex-1">
        <aside aria-label="Manage layers" className="flex w-[49px] shrink-0 flex-col items-center border-r border-[#a8a8a8] bg-linear-to-r from-[#ececec] to-[#c6c6c6] pt-1.5">
          <SideGrip />
          <div className="-mt-1 flex w-full flex-col">
            {SIDE.map((t) => <SideButton key={t.n} t={t} />)}
          </div>
          <div className="mt-1 flex w-full flex-col items-center">
            <SideGrip />
            <div className="-mt-1 w-full">
              <SideButton t={{ n: "GPS tools", d: <Sat /> }} />
              <SideButton t={{ n: "Reload table", d: <g><path d="M1 1h20v20H1z" fill="#fff" stroke="#6d9cc8" strokeWidth="1.300" /><path d="M1.500 1.500h19V5h-19z" fill="#f3ca7a" /><path d="M1 9h20M1 13h20M1 17h20M6 5v16M11 5v16M16 5v16" stroke="#8bb4dc" /><path d="M9 15c1-7 8-8 11-5l2.500-2.500V14h-6.500l2-2c-2-2-4-1-5 3zM24 16c-1 8-8 9-11 6l-2.500 2.500V18H17l-2 2c2 2 5 0 5.500-4z" fill="#7ccb3a" stroke="#3f8a16" strokeWidth=".9" /></g> }} />
            </div>
          </div>
        </aside>

        <section aria-label="Layers" className="flex w-[367px] shrink-0 flex-col border-r border-[#9a9a9a] bg-white">
          <div className="flex h-[26px] shrink-0 items-center gap-1.5 border-b border-[#b4b4b4] bg-linear-to-b from-[#ededed] to-[#cacaca] pl-0.5">
            <button type="button" aria-label="Close panel">
              <svg width="14" height="14" viewBox="0 0 14 14" className="block"><circle cx="7" cy="7" r="7" fill="#3c3c3c" /><path d="M4.200 4.200l5.600 5.600M9.800 4.200L4.200 9.800" stroke="#fff" strokeWidth="2" /></svg>
            </button>
            <button type="button" aria-label="Float panel">
              <svg width="14" height="14" viewBox="0 0 14 14" className="block"><circle cx="7" cy="7" r="7" fill="#3c3c3c" /><path d="M5.500 5V3.500h5V8H9M3.500 5.500h5V10h-5z" fill="none" stroke="#fff" strokeWidth="1.200" /></svg>
            </button>
            <h2 className="flex-1 pr-1 text-center text-[11px]">Layers</h2>
          </div>
          <div className="flex h-[37px] shrink-0 gap-2 border-b border-[#8f8f8f] bg-[#ececec] pl-1">
            {LAYER_TOOLS.map((t) => (
              <button key={t.n} type="button" aria-label={t.n} className="flex h-[26px] w-[26px] items-center justify-center border border-[#c0c0c0] bg-[#f0f0f0]">
                <svg width="20" height="20" viewBox="0 0 20 20" fill="none" className="shrink-0">{t.d}</svg>
              </button>
            ))}
          </div>
          <ul>
            {LAYERS.map((l) => (
              <li key={l.name} className={`flex h-5 items-center pl-[27px] ${l.sel ? "bg-[#d0d0d0]" : ""}`}>
                <Tick id={l.name} />
                <svg width="16" height="16" viewBox="0 0 16 16" className="mr-1.5 ml-[11px] shrink-0">{l.sym}</svg>
                <label htmlFor={l.name} className={`font-bold ${l.sel ? "underline" : ""}`}>{l.name}</label>
              </li>
            ))}
          </ul>
        </section>

        <main className="relative min-w-0 flex-1 overflow-hidden border-t border-r border-l border-t-[#8f8f8f] border-r-[#e8e8e8] border-l-[#8a8a8a] bg-[#776ba6]">
          <svg className="absolute inset-0 h-full w-full" aria-hidden="true">
            <path d="M-2 -2H199L183 40 170 77 172 160 178 300H-2z" fill="#fff" stroke="#2c2a3c" />
            {POINTS.map((p) => <circle key={p.x} cx={p.x} cy={p.y} r="2.500" fill="#b455b8" stroke="#1c1c1c" strokeWidth="1.200" />)}
          </svg>
          {POINTS.map((p) => (
            <span key={p.x} className="absolute -mt-3 font-['DejaVu_Sans',sans-serif] text-[10px] leading-3.5 [text-shadow:1px_0_white,-1px_0_white,0_1px_white,0_-1px_white,1px_1px_white,-1px_-1px_white,1px_-1px_white,-1px_1px_white]" style={{ left: p.x, top: p.y }}>
              {p.t}
            </span>
          ))}
        </main>
      </div>

      <footer className="flex h-[33px] shrink-0 items-center border-t border-[#a8a8a8] bg-[#ececec] pl-1.5">
        <span>Validation finished.</span>
        <div className="ml-auto flex items-center">
          <button type="button" aria-label="Toggle extents" className="mr-[9px] flex h-5 w-5 items-center justify-center border border-[#bbb]">
            <svg width="16" height="16" viewBox="0 0 16 16" fill="#e2e2e2" stroke="#222" strokeWidth="1.300"><path d="M3.500 3a3.500 3 0 0 1 6-1l1.500 6a4 3.500 0 1 1-4 5L2 7a3 3 0 0 1 1.500-4z" /><path d="M3 5.500l6.500-2M5 2l2 7M7 9.500a4 3.500 0 0 1 6 3M11 3l4-2M1.500 10l2 3" fill="none" /><circle cx="10.500" cy="12" r="1" fill="#222" /></svg>
          </button>
          <label htmlFor="coordinate" className="mr-2.5">Coordinate:</label>
          <input id="coordinate" defaultValue="410882.3,5084584.0" className="mr-[9px] h-5 w-[300px] border border-[#b5b5b5] border-t-[#8f8f8f] bg-white text-center" />
          <label htmlFor="scale" className="mr-3.5">Scale</label>
          <span className="relative mr-2 flex h-[15px] w-[94px]">
            <select id="scale" className="h-[15px] w-full appearance-none rounded-r-[3px] border border-[#a5a5a5] bg-white pl-0.5 leading-3.5">
              <option>1:805</option>
            </select>
            <span className="pointer-events-none absolute inset-y-px right-px flex w-3.5 items-center justify-center rounded-r-[3px] border-l border-[#aaa] bg-[#f2f2f2]">
              <svg width="6" height="5" viewBox="0 0 6 5"><path d="M0 0h6L3 5z" fill="#444" /></svg>
            </span>
          </span>
          <Tick id="render" dark />
          <label htmlFor="render" className="mr-1.5 ml-0.5">Render</label>
          <span className="mr-2.5 text-[#444]">EPSG:26920</span>
          <button type="button" aria-label="CRS status" className="mr-1.5 flex h-5 w-5 items-center justify-center border border-[#bbb] bg-[#e4e4e4]">
            <svg width="16" height="16" viewBox="0 0 16 16" fill="none" stroke="#808080" strokeWidth="1.200"><circle cx="8" cy="8" r="6" fill="#c4c4c4" strokeWidth="2" /><ellipse cx="8" cy="8" rx="2.500" ry="6" /><path d="M2 8h12" /><path d="M8 0v3M8 13v3M0 8h3M13 8h3" stroke="#666" strokeWidth="2" /></svg>
          </button>
          <button type="button" aria-label="Messages" className="mr-3.5 flex h-5 w-5 items-center justify-center border border-[#bbb]">
            <svg width="14" height="14" viewBox="0 0 14 14"><path d="M7 1l6 11.500H1z" fill="#f5efa0" stroke="#777" strokeWidth="1.200" strokeLinejoin="round" /><path d="M7 5v4M7 10v1.500" stroke="#222" strokeWidth="1.400" /></svg>
          </button>
          <svg width="12" height="12" viewBox="0 0 12 12" className="mt-4"><path d="M1 12L12 1M5 12l7-7M9 12l3-3" stroke="#888" /></svg>
        </div>
      </footer>

      <div role="dialog" aria-labelledby="dialog-title" className="absolute top-[278px] left-[383px] flex h-[470px] w-[307px] flex-col rounded-[5px] bg-[#ececec] shadow-[0_18px_36px_6px_rgba(0,0,0,0.55),0_0_1px_1px_rgba(0,0,0,0.25)]">
        <div className="flex h-[22px] shrink-0 items-center rounded-t-[5px] border-b border-[#6e6e6e] bg-linear-to-b from-[#e6e6e6] to-[#b4b4b4] px-2">
          <div className="flex shrink-0 gap-2">
            <Light c="border-[#8e2b2b] bg-radial-[at_50%_75%] from-[#ff9a94] to-[#d8363c]" label="Close dialog" />
            <Light c={CLEAR} label="Minimize dialog" />
            <Light c="border-[#41702c] bg-radial-[at_50%_75%] from-[#c3f09a] to-[#5fae40]" label="Zoom dialog" />
          </div>
          <h2 id="dialog-title" className="flex-1 pl-1 text-center whitespace-nowrap text-[#333]">long_lake_manual_contours – Fea…</h2>
        </div>
        <form className="flex flex-1 flex-col pr-3 pb-[11px] pl-6" onSubmit={(e) => e.preventDefault()}>
          <div className="mt-[125px] flex items-center pr-3">
            <label htmlFor="fid" className="w-16">id</label>
            <span className="relative flex flex-1">
              <input id="fid" className="h-[23px] w-full min-w-0 border border-[#6b9cc9] bg-white px-1 shadow-[0_0_2px_2px_#7fb0dc] outline-none" />
              <span className="pointer-events-none absolute top-1 left-[3px] h-4 w-px bg-black" />
            </span>
          </div>
          <div className="mt-[111px] flex items-center pr-3">
            <label htmlFor="depth" className="w-16">depth_m</label>
            <input id="depth" placeholder="NULL" className="h-[23px] min-w-0 flex-1 border border-[#b8b8b8] border-t-[#8f8f8f] bg-white px-0.5 placeholder:text-[#808080]" />
          </div>
          <div className="mt-auto flex justify-end gap-3.5">
            <button type="button" className="h-[21px] w-[69px] rounded border border-[#949494] bg-linear-to-b from-white to-[#ededed] pb-px">Cancel</button>
            <button type="submit" className="h-[21px] w-[69px] rounded border border-[#4d5a9c] bg-linear-to-b from-[#d6e9fa] via-[#8cc4f2] to-[#c3f1ff] pb-px">OK</button>
          </div>
        </form>
      </div>
    </div>
  );
}
